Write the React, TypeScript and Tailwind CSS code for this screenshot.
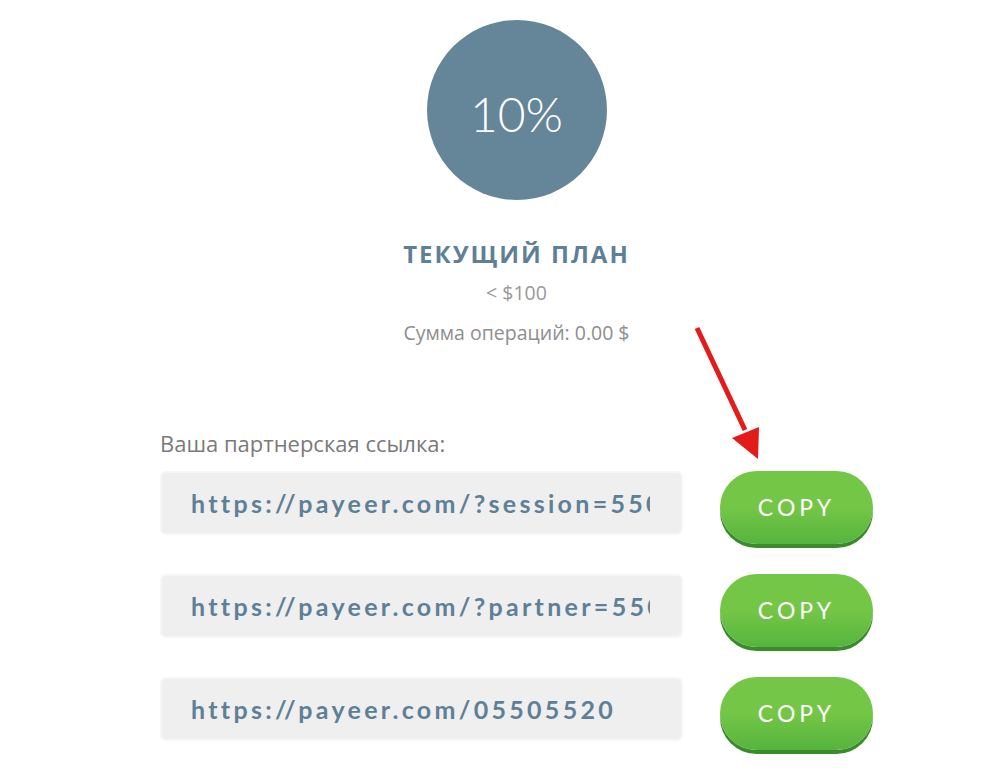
import React from 'react';

const links = [
  'https://payeer.com/?session=5505520',
  'https://payeer.com/?partner=5505520',
  'https://payeer.com/05505520',
];

export default function App() {
  return (
    <div className="relative min-h-[769px] bg-white" style={{ fontFamily: '"Open Sans", "Liberation Sans", sans-serif' }}>
      <div className="ml-[160px] w-[713px] pt-[20px]">
        {/* plan circle */}
        <div className="mx-auto flex h-[180px] w-[180px] items-center justify-center rounded-full bg-[#658599]">
          <span className="mt-[8px] text-[48px] font-light leading-none text-white" style={{ fontFamily: 'Lato, "Open Sans", sans-serif' }}>10%</span>
        </div>

        <div className="mt-[39px] text-center text-[24px] font-bold leading-[30px] tracking-[2px] text-[#5e8097]">ТЕКУЩИЙ ПЛАН</div>
        <div className="mt-[12px] text-center text-[19.5px] leading-[24px] text-[#999]">&lt; $100</div>
        <div className="mt-[16px] text-center text-[19.5px] leading-[24px] text-[#8e8e8e]">Сумма операций: 0.00 $</div>

        <div className="mt-[84px] text-[22px] leading-[28px] text-[#7a7a7a]">Ваша партнерская ссылка:</div>

        <div className="mt-[14px] flex flex-col gap-[30px]">
          {links.map((link) => (
            <div key={link} className="flex items-start">
              <div className="h-[64px] w-[523px] rounded-[6px] border-2 border-[#f6f6f6] bg-[#efefef] pl-[29px] pr-[31px]">
                <div
                  className="overflow-hidden whitespace-nowrap text-[25px] font-bold leading-[60px] tracking-[3.3px] text-[#5e8097]"
                  style={{ fontFamily: 'Lato, "DejaVu Sans", sans-serif' }}
                >
                  {link}
                </div>
              </div>
              <button className="ml-[37px] h-[73px] w-[153px] rounded-full bg-gradient-to-b from-[#74c646] from-50% to-[#55b43e] text-[23px] tracking-[4px] text-white shadow-[0_4px_0_#3b8a2c]" style={{ fontFamily: 'Lato, "Open Sans", sans-serif' }}>
                COPY
              </button>
            </div>
          ))}
        </div>
      </div>

      {/* red pointer arrow */}
      <svg className="absolute left-0 top-0" width="1003" height="769" style={{ pointerEvents: 'none' }}>
        <line x1="697" y1="328" x2="745" y2="430" stroke="#e31b1b" strokeWidth="5" />
        <polygon points="758,459 732,438 759,427" fill="#e31b1b" />
      </svg>
    </div>
  );
}
